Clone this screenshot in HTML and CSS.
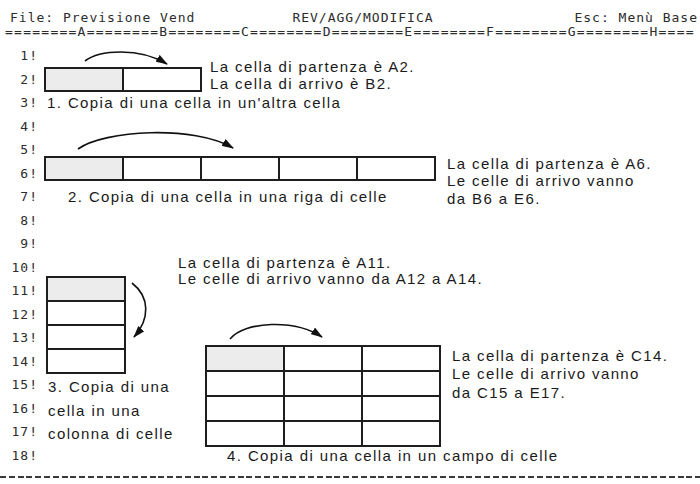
FILE: index.html
```html
<!DOCTYPE html>
<html>
<head>
<meta http-equiv="Content-Type" content="text/html; charset=utf-8"/>
<title>Copia di celle</title>
<link rel="stylesheet" href="styles.css">
</head>
<body>
<svg class="defs" width="0" height="0">
  <defs>
    <marker id="head" viewBox="0 0 12 8" refX="11" refY="4" markerWidth="12" markerHeight="8" markerUnits="userSpaceOnUse" orient="auto">
      <path d="M0 0 L12 4 L0 8 z" fill="#111"/>
    </marker>
  </defs>
</svg>

<div class="screen">
  <div class="status mono">
    <span class="file">File: Previsione Vend</span>
    <span class="mode">REV/AGG/MODIFICA</span>
    <span class="esc">Esc: Menù Base</span>
  </div>
  <div class="ruler mono">========A========B========C========D========E========F========G========H====</div>

  <div class="sheet">
    <span class="num mono">1!</span>
    <span class="num mono">2!</span>
    <span class="num mono">3!</span>
    <span class="num mono">4!</span>
    <span class="num mono">5!</span>
    <span class="num mono">6!</span>
    <span class="num mono">7!</span>
    <span class="num mono">8!</span>
    <span class="num mono">9!</span>
    <span class="num mono">10!</span>
    <span class="num mono">11!</span>
    <span class="num mono">12!</span>
    <span class="num mono">13!</span>
    <span class="num mono">14!</span>
    <span class="num mono">15!</span>
    <span class="num mono">16!</span>
    <span class="num mono">17!</span>
    <span class="num mono">18!</span>

    <!-- 1. una cella in un'altra -->
    <svg class="arrow arrow-1" width="156" height="23">
      <path d="M41 17 C55 6, 95 3, 123 20" marker-end="url(#head)"/>
    </svg>
    <div class="cells cells-1">
      <span class="from"></span><span></span>
    </div>
    <p class="note note-1">La cella di partenza è A2.<br>La cella di arrivo è B2.</p>
    <p class="caption caption-1">1. Copia di una cella in un'altra cella</p>

    <!-- 2. una riga -->
    <svg class="arrow arrow-2" width="312" height="46">
      <path d="M34 34 C60 15, 150 10, 189 33" marker-end="url(#head)"/>
    </svg>
    <div class="cells cells-2">
      <span class="from"></span><span></span><span></span><span></span><span></span>
    </div>
    <p class="note note-2">La cella di partenza è A6.<br>Le celle di arrivo vanno<br>da B6 a E6.</p>
    <p class="caption caption-2">2. Copia di una cella in una riga di celle</p>

    <!-- 3. una colonna -->
    <p class="note note-3">La cella di partenza è A11.<br>Le celle di arrivo vanno da A12 a A14.</p>
    <div class="cells cells-3">
      <span class="from"></span><span></span><span></span><span></span>
    </div>
    <svg class="arrow arrow-3" width="78" height="70">
      <path d="M10 4 C28 18, 28 40, 12 58" marker-end="url(#head)"/>
    </svg>
    <p class="caption caption-3">3. Copia di una<br>cella in una<br>colonna di celle</p>

    <!-- 4. un campo -->
    <svg class="arrow arrow-4" width="156" height="23">
      <path d="M30 13 C45 -5, 95 -7, 122 11" marker-end="url(#head)"/>
    </svg>
    <div class="cells cells-4">
      <span class="from"></span><span></span><span></span>
      <span></span><span></span><span></span>
      <span></span><span></span><span></span>
      <span></span><span></span><span></span>
    </div>
    <p class="note note-4">La cella di partenza è C14.<br>Le celle di arrivo vanno<br>da C15 a E17.</p>
    <p class="caption caption-4">4. Copia di una cella in un campo di celle</p>
  </div>

  <div class="dashes"></div>
</div>
</body>
</html>
```

FILE: styles.css
```css
body {
  margin: 0;
  background-color: white;
  color: #1a1a1a;
  font-family: "Liberation Sans", Arial, sans-serif;
}

.defs {
  position: absolute;
}

.screen {
  width: 700px;
  height: 484px;
  overflow: hidden;
}

.mono {
  font-family: "DejaVu Sans Mono", monospace;
  font-size: 13px;
  letter-spacing: 1px;
  color: #2c2c2c;
}

.status {
  display: flex;
  padding: 11px 2px 0 10px;
  line-height: 14px;
  white-space: nowrap;
}

.mode {
  margin-left: 97px;
}

.esc {
  margin-left: auto;
}

.ruler {
  padding-left: 5px;
  line-height: 14px;
  letter-spacing: 1.25px;
  white-space: nowrap;
  overflow: hidden;
}

/* the sheet: 18 rows, a label column and the columns A..H */
.sheet {
  display: grid;
  grid-template-columns: 44px repeat(8, 78px) 1fr;
  grid-template-rows: repeat(18, 23.5px);
  margin-top: 5px;
}

.num {
  grid-column: 1;
  text-align: right;
  padding-right: 6px;
  line-height: 23.5px;
}

p {
  margin: 0;
  font-size: 15px;
  letter-spacing: 1.4px;
  white-space: nowrap;
}

.arrow {
  overflow: visible;
}

.arrow path {
  fill: none;
  stroke: #111;
  stroke-width: 1.6;
}

.cells {
  display: grid;
  gap: 2px;
  padding: 2px;
  background-color: #1e1e1e;
  justify-self: start;
  align-self: start;
}

.cells span {
  background-color: white;
}

.cells span.from {
  background-color: #ececec;
}

.caption {
  line-height: 23.5px;
}

/* 1 */
.arrow-1 { grid-column: 2 / 4; grid-row: 1; }
.cells-1 {
  grid-column: 2 / 4;
  grid-row: 2;
  grid-template-columns: repeat(2, 76px);
  grid-template-rows: 21px;
  margin-top: -1px;
}
.note-1 {
  grid-column: 4 / -1;
  grid-row: 1 / 3;
  align-self: end;
  margin-bottom: -1px;
  padding-left: 10px;
  line-height: 16.5px;
}
.caption-1 { grid-column: 2 / -1; grid-row: 3; padding-left: 3px; }

/* 2 */
.arrow-2 { grid-column: 2 / 6; grid-row: 4 / 6; }
.cells-2 {
  grid-column: 2 / 7;
  grid-row: 6;
  grid-template-columns: repeat(5, 76px);
  grid-template-rows: 21px;
  margin-top: -6px;
}
.note-2 {
  grid-column: 7 / -1;
  grid-row: 6 / 9;
  align-self: start;
  margin-top: -7px;
  padding-left: 13px;
  line-height: 17.5px;
}
.caption-2 { grid-column: 2 / -1; grid-row: 7; padding-left: 24px; }

/* 3 */
.note-3 {
  grid-column: 3 / -1;
  grid-row: 10 / 12;
  align-self: start;
  margin-top: -1px;
  padding-left: 56px;
  line-height: 16.5px;
}
.cells-3 {
  grid-column: 2;
  grid-row: 11 / 15;
  grid-template-columns: 76px;
  grid-template-rows: repeat(4, 22px);
  margin: -3px 0 0 2px;
}
.arrow-3 { grid-column: 3; grid-row: 11 / 14; }
.caption-3 {
  grid-column: 2 / 4;
  grid-row: 15 / 18;
  align-self: start;
  margin-top: 2px;
  padding-left: 4px;
}

/* 4 */
.arrow-4 { grid-column: 4 / 6; grid-row: 13; }
.cells-4 {
  grid-column: 4 / 7;
  grid-row: 14 / 18;
  grid-template-columns: repeat(3, 76px);
  grid-template-rows: repeat(4, 23px);
  margin: -5px 0 0 5px;
}
.note-4 {
  grid-column: 7 / -1;
  grid-row: 14 / 17;
  align-self: start;
  margin-top: -3px;
  padding-left: 18px;
  line-height: 18.5px;
}
.caption-4 { grid-column: 4 / -1; grid-row: 18; padding-left: 27px; }

.dashes {
  height: 2px;
  margin-top: 9px;
  background: repeating-linear-gradient(90deg, #3a3a3a 0 6px, transparent 6px 8.8px);
}
```
